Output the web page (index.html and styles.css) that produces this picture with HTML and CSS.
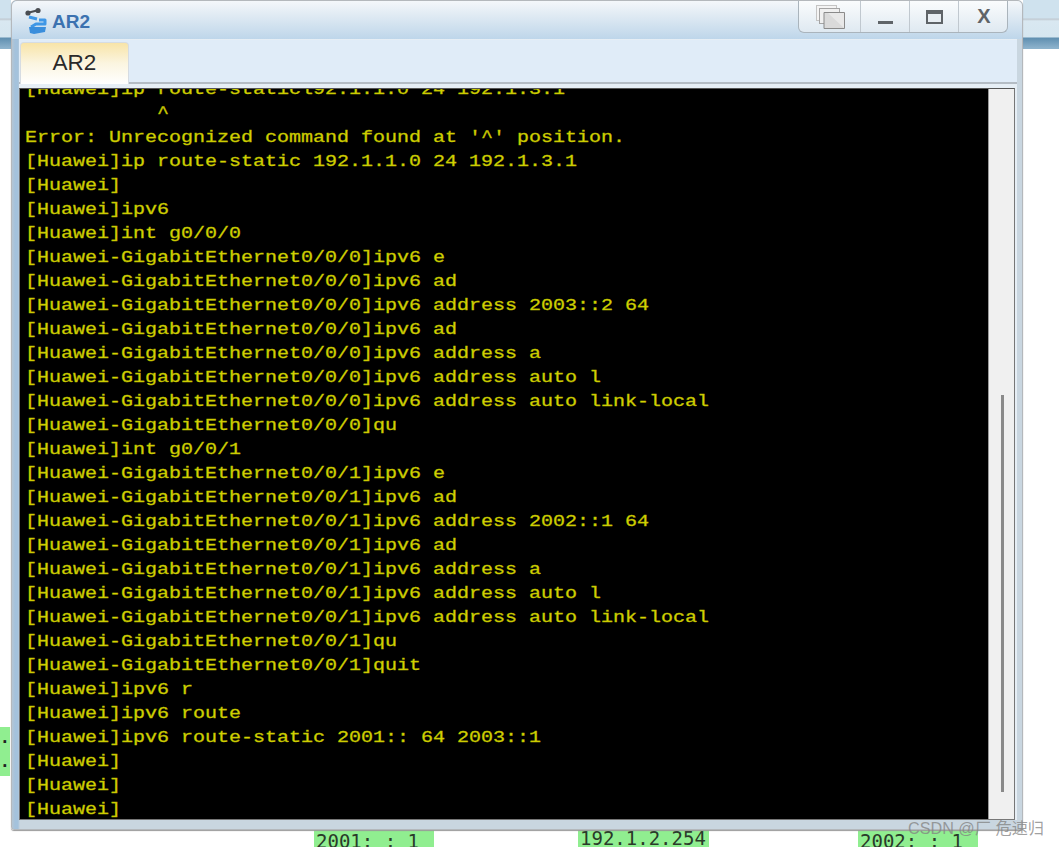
FILE: index.html
```html
<!DOCTYPE html>
<html lang="en">
<head>
<meta charset="utf-8">
<title>AR2</title>
<link rel="stylesheet" href="styles.css">
</head>
<body>
<div class="canvas">
  <div class="backbar backbar-left"></div>
  <div class="backbar backbar-right"></div>
  <div class="node node-left"><span>.</span><span>.</span></div>
  <div class="node node-a">2001: : 1</div>
  <div class="node node-b">192.1.2.254</div>
  <div class="node node-c">2002: : 1</div>

  <div class="window">
    <header class="titlebar">
      <svg class="logo" width="24" height="28" viewBox="0 0 24 28">
        <path d="M3 7 L15 4" stroke="#4a4d52" stroke-width="2" fill="none"/>
        <circle cx="4" cy="7" r="2.6" fill="#4a4d52"/>
        <circle cx="14" cy="4.5" r="2.6" fill="#4a4d52"/>
        <path d="M5 11 L13 13" stroke="#3f97e6" stroke-width="3" fill="none"/>
        <path d="M15 14 H21 V18 H12 L7 21" stroke="#3f97e6" stroke-width="3" fill="none" stroke-linejoin="round"/>
        <path d="M5 21 H22 L21 26 L10 28 L6 27 Z" fill="#3a8edc"/>
      </svg>
      <span class="title">AR2</span>
      <div class="controls">
        <button class="ctl ctl-restore">
          <svg width="30" height="24" viewBox="0 0 30 24">
            <rect x="1.5" y="0.5" width="20" height="15" fill="#f4f4f4" stroke="#c4c4c4"/>
            <rect x="4.5" y="3.5" width="20" height="15" fill="#f0f0f0" stroke="#a4a4a4"/>
            <path d="M9 7.5 H29.5 V23.5 H9 Z" fill="#dadada" stroke="#8a8a8a"/>
            <path d="M13 8 L29 23 V8 Z" fill="#e8e8e8"/>
          </svg>
        </button>
        <button class="ctl ctl-min"><span class="min-bar"></span></button>
        <button class="ctl ctl-max"><span class="max-box"></span></button>
        <button class="ctl ctl-close">X</button>
      </div>
    </header>
    <div class="body">
      <nav class="tabs"><div class="tab">AR2</div></nav>
      <div class="console">
        <div class="screen">
<pre class="output">[Huawei]ip route-staticl92.1.1.0 24 192.1.3.1
           ^
Error: Unrecognized command found at '^' position.
[Huawei]ip route-static 192.1.1.0 24 192.1.3.1
[Huawei]
[Huawei]ipv6
[Huawei]int g0/0/0
[Huawei-GigabitEthernet0/0/0]ipv6 e
[Huawei-GigabitEthernet0/0/0]ipv6 ad
[Huawei-GigabitEthernet0/0/0]ipv6 address 2003::2 64
[Huawei-GigabitEthernet0/0/0]ipv6 ad
[Huawei-GigabitEthernet0/0/0]ipv6 address a
[Huawei-GigabitEthernet0/0/0]ipv6 address auto l
[Huawei-GigabitEthernet0/0/0]ipv6 address auto link-local
[Huawei-GigabitEthernet0/0/0]qu
[Huawei]int g0/0/1
[Huawei-GigabitEthernet0/0/1]ipv6 e
[Huawei-GigabitEthernet0/0/1]ipv6 ad
[Huawei-GigabitEthernet0/0/1]ipv6 address 2002::1 64
[Huawei-GigabitEthernet0/0/1]ipv6 ad
[Huawei-GigabitEthernet0/0/1]ipv6 address a
[Huawei-GigabitEthernet0/0/1]ipv6 address auto l
[Huawei-GigabitEthernet0/0/1]ipv6 address auto link-local
[Huawei-GigabitEthernet0/0/1]qu
[Huawei-GigabitEthernet0/0/1]quit
[Huawei]ipv6 r
[Huawei]ipv6 route
[Huawei]ipv6 route-static 2001:: 64 2003::1
[Huawei]
[Huawei]
[Huawei]</pre>
        </div>
        <div class="scrollbar"><div class="thumb"></div></div>
      </div>
    </div>
  </div>
  <div class="watermark">CSDN @厂 危速归</div>
</div>
</body>
</html>
```
FILE: styles.css
```css
* { box-sizing: border-box; }
html, body { margin: 0; padding: 0; background: #fff; }
.canvas { position: relative; width: 1059px; height: 847px; overflow: hidden; background: #fff; font-family: "Liberation Sans", Arial, sans-serif; }

.backbar { position: absolute; top: 0; height: 49px; background: linear-gradient(#cfe2ee 0, #cfe2ee 18px, #c0c8d0 19px, #d9e8f1 21px, #d5e6f0 37px, #5f8fb0 38px, #8cb2cc 48px); }
.backbar-left { left: 0; width: 11px; }
.backbar-right { left: 1023px; width: 36px; }

.node { position: absolute; background: #90ee90; color: #2a3a2a; font-family: "DejaVu Sans Mono", monospace; font-size: 19px; line-height: 16px; white-space: pre; padding-left: 2px; }
.node-left { left: 0; top: 727px; width: 10px; height: 49px; display: flex; flex-direction: column; gap: 6px; font-size: 16px; line-height: 18px; font-weight: bold; padding: 2px 0 0; color: #222; }
.node-left span { height: 18px; }
.node-a { left: 314px; top: 830px; width: 120px; height: 17px; padding-top: 3px; overflow: hidden; }
.node-b { left: 578px; top: 830px; width: 131px; height: 17px; overflow: hidden; }
.node-c { left: 858px; top: 830px; width: 120px; height: 17px; padding-top: 3px; overflow: hidden; }

.window { position: absolute; left: 11px; top: 0; width: 1012px; height: 830px; display: flex; flex-direction: column; background: linear-gradient(90deg, #b5c6d4 0, #a4c2dc 3px, #a4c2dc 6px, #c9d6e0 8px); border: 1px solid #b4b8bc; border-radius: 5px 5px 3px 3px; box-shadow: 0 1px 1px #999; }
.titlebar { flex: none; height: 38px; display: flex; align-items: flex-start; padding-left: 12px; background: linear-gradient(#f4f7fa, #e6eef5 10px, #bed6ea); border-radius: 5px 5px 0 0; }
.logo { margin-top: 5px; flex: none; }
.title { margin: 10px 0 0 4px; font-size: 19px; line-height: 22px; font-weight: bold; color: #3c72b0; }
.controls { margin-left: auto; margin-right: 14px; height: 32px; display: flex; border: 1px solid #aab4bc; border-top: 0; border-radius: 0 0 6px 6px; overflow: hidden; background: linear-gradient(#fafcfd, #dfe9f1); }
.ctl { margin: 0; padding: 0; border: 0; border-left: 1px solid #c0c8cf; background: none; display: flex; align-items: center; justify-content: center; width: 49px; font-family: "Liberation Sans", sans-serif; }
.ctl-restore { width: 61px; border-left: 0; }
.min-bar { width: 15px; height: 3px; background: #5f6468; margin-top: 11px; }
.max-box { width: 17px; height: 14px; border: 2px solid #5f6468; border-top-width: 4px; background: #e8eef3; }
.ctl-close { font-size: 20px; font-weight: bold; color: #5f6468; padding-left: 2px; }

.body { flex: 1; min-height: 0; margin: 0 5px 9px 7px; display: flex; flex-direction: column; background: #e6eef5; }
.tabs { flex: none; height: 44px; margin-top: 1px; padding: 2px 0 0 1px; background: #e0ecf8; border-bottom: 2px solid #b4bcc4; display: flex; }
.tab { width: 109px; height: 42px; border: 1px solid #d6dce2; border-bottom: 0; border-radius: 4px 4px 0 0; background: linear-gradient(#f8e4a8, #fbf5e0 50%, #fff); font-size: 22.5px; line-height: 40px; text-align: center; color: #2a2a2a; }

.console { flex: 1; min-height: 0; margin: 4px 2px 0 0; display: flex; border: 1px solid #777; border-top-color: #555; background: #000; }
.screen { flex: 1; min-width: 0; background: #000; overflow: hidden; padding-left: 5px; }
.output { margin: -11px 0 0; width: 80%; font-family: "Liberation Mono", monospace; font-size: 16px; line-height: 24px; color: #d4d400; transform: scaleX(1.25); transform-origin: left top; -webkit-text-stroke: 0.35px #b8b800; white-space: pre; }
.scrollbar { flex: none; width: 26px; background: #f0f0f0; position: relative; border-left: 1px solid #999; }
.thumb { position: absolute; left: 12px; top: 306px; bottom: 27px; width: 3px; background: #8a8a8a; }

.watermark { position: absolute; left: 908px; top: 819px; font-family: "Liberation Sans", "Noto Sans CJK SC", sans-serif; font-size: 16.2px; line-height: 18px; color: rgba(130,130,130,0.75); white-space: pre; }
```
